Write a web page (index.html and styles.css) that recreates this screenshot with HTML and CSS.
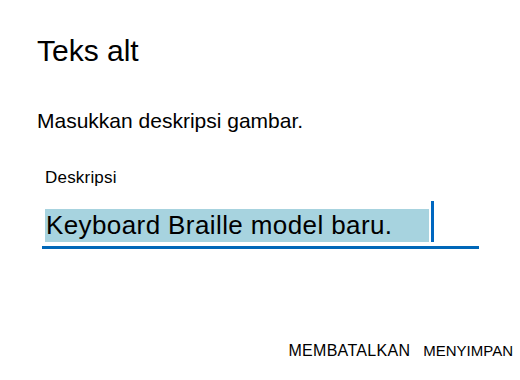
FILE: index.html
```html
<!DOCTYPE html>
<html lang="id">
<head>
  <meta charset="UTF-8">
  <meta name="viewport" content="width=device-width, initial-scale=1.0">
  <title>Teks alt</title>
  <link rel="stylesheet" href="styles.css">
</head>
<body>
  <div class="dialog">
    <h1 class="title">Teks alt</h1>
    <p class="hint">Masukkan deskripsi gambar.</p>
    <label class="label">Deskripsi</label>
    <div class="field">
      <span class="value">Keyboard Braille model baru.</span>
      <span class="caret"></span>
    </div>
    <div class="actions">
      <button class="btn cancel">MEMBATALKAN</button>
      <button class="btn save">MENYIMPAN</button>
    </div>
  </div>
</body>
</html>
```

FILE: styles.css
```css
/* Base */
* { box-sizing: border-box; }
body {
  margin: 0;
  background: #fff;
  color: #000;
  font-family: "Liberation Sans", Arial, sans-serif;
}

.dialog {
  width: 520px;
  height: 380px;
  padding: 34px 0 0 37px;
}

.title {
  margin: 0;
  font-size: 30px;
  line-height: 34px;
  font-weight: normal;
}
.hint {
  margin: 41px 0 0;
  font-size: 21px;
  line-height: 24px;
}
.label {
  display: block;
  margin: 35px 0 0 8px;
  font-size: 17px;
  line-height: 20px;
  letter-spacing: 0.2px;
}

/* Text field */
.field {
  display: flex;
  align-items: flex-end;
  width: 437px;
  margin: 13px 0 0 5px;
  padding-bottom: 4px;
  border-bottom: 3px solid #0067b8;
}
.value {
  width: 384px;
  height: 33px;
  margin-left: 3px;
  padding-left: 1px;
  background: #a7d3df;
  font-size: 26px;
  line-height: 33px;
  letter-spacing: 0.4px;
  white-space: nowrap;
}
.caret {
  width: 3px;
  height: 41px;
  margin-left: 2px;
  background: #0067c0;
}

/* Buttons */
.actions {
  display: flex;
  justify-content: flex-end;
  align-items: baseline;
  gap: 13px;
  margin: 92px 0 0 -37px;
  padding-right: 7px;
}
.btn {
  padding: 0;
  border: none;
  background: none;
  color: #000;
  font-family: inherit;
  line-height: 20px;
  cursor: pointer;
}
.cancel { font-size: 16px; letter-spacing: 0.3px; }
.save { font-size: 15px; letter-spacing: 0; }
```
